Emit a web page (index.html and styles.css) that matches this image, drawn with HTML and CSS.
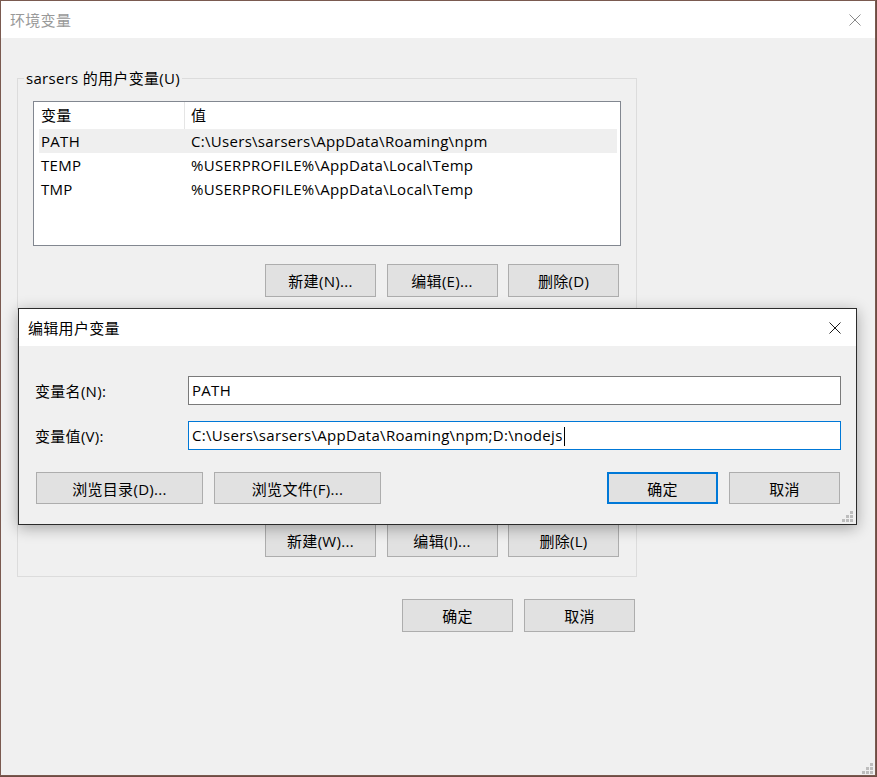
FILE: index.html
```html
<!DOCTYPE html>
<html lang="zh-CN">
<head>
<meta charset="utf-8">
<title>环境变量</title>
<link rel="stylesheet" href="styles.css">
</head>
<body>
<div class="window">
  <div class="titlebar">
    <span class="title inactive">环境变量</span>
    <svg class="close" width="12" height="12" viewBox="0 0 12 12"><path d="M0.5 0.5 L11.5 11.5 M11.5 0.5 L0.5 11.5" stroke="#8a8a8a" stroke-width="1" fill="none"/></svg>
  </div>
  <div class="body">
    <div class="group">
      <div class="legend">sarsers 的用户变量(U)</div>
      <div class="list">
        <div class="head"><div class="c1">变量</div><div class="c2">值</div></div>
        <div class="row sel"><div class="c1">PATH</div><div class="c2">C:\Users\sarsers\AppData\Roaming\npm</div></div>
        <div class="row"><div class="c1">TEMP</div><div class="c2">%USERPROFILE%\AppData\Local\Temp</div></div>
        <div class="row"><div class="c1">TMP</div><div class="c2">%USERPROFILE%\AppData\Local\Temp</div></div>
      </div>
      <div class="btns">
        <button class="btn">新建(N)...</button>
        <button class="btn">编辑(E)...</button>
        <button class="btn">删除(D)</button>
      </div>
    </div>
    <div class="group sys">
      <div class="legend empty"></div>
      <div class="list"></div>
      <div class="btns">
        <button class="btn">新建(W)...</button>
        <button class="btn">编辑(I)...</button>
        <button class="btn">删除(L)</button>
      </div>
    </div>
    <div class="footer">
      <button class="btn">确定</button>
      <button class="btn">取消</button>
    </div>
  </div>
  <svg class="grip main-grip" width="11" height="11" viewBox="0 0 11 11"><g fill="#bdbdbd"><rect x="8" y="0" width="3" height="3"/><rect x="4" y="4" width="3" height="3"/><rect x="8" y="4" width="3" height="3"/><rect x="0" y="8" width="3" height="3"/><rect x="4" y="8" width="3" height="3"/><rect x="8" y="8" width="3" height="3"/></g></svg>

  <div class="dialog">
    <div class="titlebar dlg-title">
      <span class="title">编辑用户变量</span>
      <svg class="close" width="12" height="12" viewBox="0 0 12 12"><path d="M0.5 0.5 L11.5 11.5 M11.5 0.5 L0.5 11.5" stroke="#1a1a1a" stroke-width="1" fill="none"/></svg>
    </div>
    <div class="dlg-body">
      <div class="field">
        <div class="label">变量名(N):</div>
        <div class="input">PATH</div>
      </div>
      <div class="field">
        <div class="label">变量值(V):</div>
        <div class="input focus">C:\Users\sarsers\AppData\Roaming\npm;D:\nodejs<span class="caret"></span></div>
      </div>
      <div class="dlg-btns">
        <div class="grp">
          <button class="btn wide">浏览目录(D)...</button>
          <button class="btn wide">浏览文件(F)...</button>
        </div>
        <div class="grp">
          <button class="btn default">确定</button>
          <button class="btn">取消</button>
        </div>
      </div>
    </div>
    <svg class="grip dlg-grip" width="11" height="11" viewBox="0 0 11 11"><g fill="#bdbdbd"><rect x="8" y="0" width="3" height="3"/><rect x="4" y="4" width="3" height="3"/><rect x="8" y="4" width="3" height="3"/><rect x="0" y="8" width="3" height="3"/><rect x="4" y="8" width="3" height="3"/><rect x="8" y="8" width="3" height="3"/></g></svg>
  </div>
</div>
</body>
</html>
```

FILE: styles.css
```css
* { box-sizing: border-box; }
html, body { margin: 0; padding: 0; }
body {
  width: 877px;
  height: 777px;
  overflow: hidden;
  background: #6e4c43;
  font-family: "Open Sans", "Noto Sans CJK SC", sans-serif;
  font-size: 15px;
  letter-spacing: 0.3px;
  color: #000;
}
.window {
  position: relative;
  width: 876px;
  height: 776px;
  border: 1px solid #7a5a50;
  background: #f0f0f0;
}
.titlebar {
  height: 37px;
  background: #fff;
  display: flex;
  align-items: center;
  justify-content: space-between;
  padding: 0 14px 0 9px;
}
.title { line-height: 20px; }
.title.inactive { color: #999; }
.close { display: block; }

.body { padding: 40px 0 0 16px; }

.group {
  width: 620px;
  border: 1px solid #dcdcdc;
  padding: 0 15px 12px;
}
.group.sys { margin-top: 28px; padding-bottom: 19px; }
.legend {
  width: max-content;
  margin: -11px 0 0 -9px;
  padding: 0 2px;
  background: #f0f0f0;
  line-height: 20px;
}
.legend.empty { height: 20px; background: transparent; }
.list {
  margin-top: 13px;
  width: 588px;
  height: 145px;
  border: 1px solid #828790;
  background: #fff;
  padding: 0 3px 0 5px;
}
.head { display: flex; height: 27px; line-height: 27px; }
.head .c1 { width: 146px; padding-left: 2px; border-right: 1px solid #e5e5e5; }
.row { display: flex; height: 24px; line-height: 24px; }
.row .c1 { width: 146px; padding-left: 2px; }
.c2 { padding-left: 6px; white-space: nowrap; }
.row.sel { background: #efefef; }

.btns {
  display: flex;
  justify-content: flex-end;
  gap: 10.5px;
  margin-top: 18px;
  padding-right: 2px;
}
.btn {
  width: 111px;
  height: 33px;
  padding: 0;
  background: #e1e1e1;
  border: 1px solid #adadad;
  font: inherit;
  letter-spacing: inherit;
  color: #000;
}
.footer {
  width: 620px;
  display: flex;
  justify-content: flex-end;
  gap: 11px;
  margin-top: 22px;
  padding-right: 2px;
}
.grip { position: absolute; display: block; }
.main-grip { right: 2px; bottom: 1px; }

.dialog {
  position: absolute;
  left: 17px;
  top: 307px;
  width: 839px;
  height: 217px;
  border: 1px solid #2b2b2b;
  background: #f0f0f0;
  box-shadow: 0 3px 14px rgba(0, 0, 0, 0.32);
}
.dlg-title { padding: 0 15px 0 9px; }
.dlg-body { padding: 30px 15px 20px 16px; }
.field { display: flex; align-items: center; }
.field + .field { margin-top: 16px; }
.label { width: 153px; }
.input {
  width: 653px;
  height: 29px;
  border: 1px solid #7a7a7a;
  background: #fff;
  padding-left: 3px;
  line-height: 27px;
  white-space: nowrap;
}
.input.focus { border-color: #0078d7; }
.caret {
  display: inline-block;
  width: 1px;
  height: 19px;
  background: #000;
  vertical-align: middle;
  margin-left: 1px;
}
.dlg-btns {
  display: flex;
  justify-content: space-between;
  margin-top: 22px;
  padding: 0 1px;
}
.dlg-btns .grp { display: flex; gap: 11px; }
.dlg-btns .btn { height: 32px; }
.dlg-btns .btn.wide { width: 167px; }
.btn.default { border: 2px solid #0078d7; }
.dlg-grip { right: 3px; bottom: 2px; }
```
